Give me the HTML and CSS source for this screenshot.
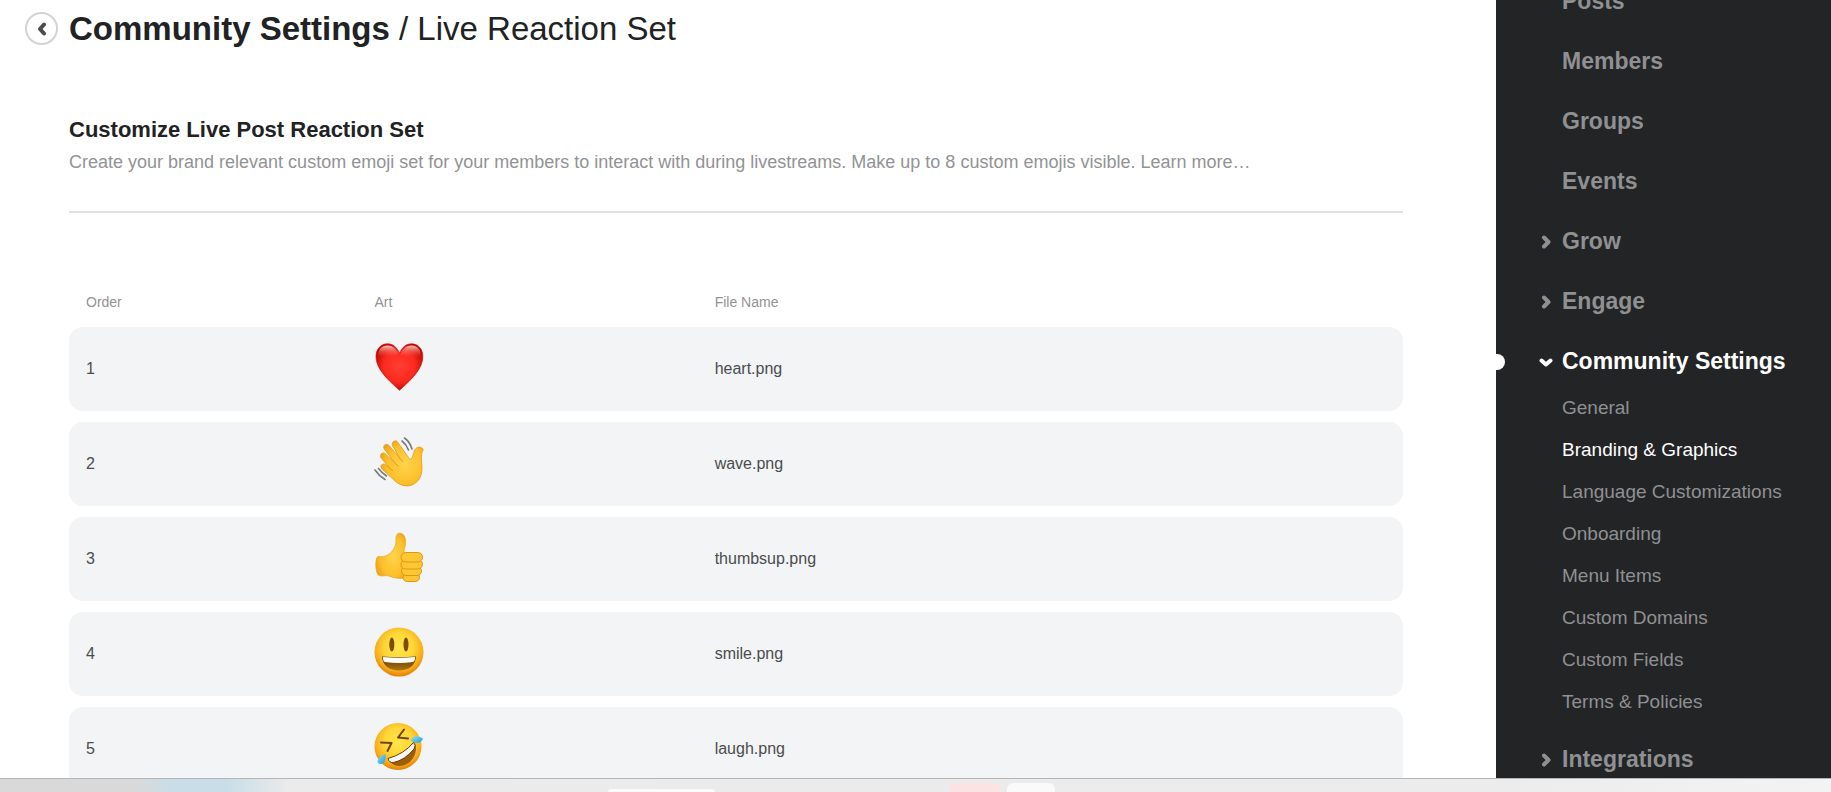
FILE: index.html
```html
<!DOCTYPE html>
<html lang="en">
<head>
    <meta charset="UTF-8">
    <meta name="viewport" content="width=device-width, initial-scale=1.0">
    <title>Community Settings / Live Reaction Set</title>
    <link rel="stylesheet" href="styles.css">
</head>
<body>
    <div class="workspace">
        <main class="content">
            <header class="page-header">
                <button type="button" class="back" aria-label="Back">
                    <svg width="10" height="14" viewBox="0 0 10 14"><path d="M7 2.500 L3 7 L7 11.500"/></svg>
                </button>
                <h1><strong>Community Settings</strong> / Live Reaction Set</h1>
            </header>

            <section class="intro">
                <h2>Customize Live Post Reaction Set</h2>
                <p>Create your brand relevant custom emoji set for your members to interact with during livestreams. Make up to 8 custom emojis visible. <a href="#">Learn more…</a></p>
            </section>

            <table class="reactions">
                <thead>
                    <tr>
                        <th class="order">Order</th>
                        <th class="art">Art</th>
                        <th>File Name</th>
                    </tr>
                </thead>
                <tbody>
                    <tr>
                        <td class="order">1</td>
                        <td class="art">
                            <svg viewBox="0 0 50 50">
                                <defs>
                                    <radialGradient id="heart" cx="50%" cy="48%" r="56%">
                                        <stop offset="0" stop-color="#ff3e33"/>
                                        <stop offset=".6" stop-color="#fb2a1f"/>
                                        <stop offset="1" stop-color="#b90602"/>
                                    </radialGradient>
                                    <linearGradient id="heartShine" x1="0" y1="0" x2="0" y2="1">
                                        <stop offset="0" stop-color="#ffd5cf" stop-opacity=".9"/>
                                        <stop offset="1" stop-color="#ff5a4c" stop-opacity="0"/>
                                    </linearGradient>
                                </defs>
                                <path d="M25.5 11.5 C23 5 18.500 1.800 13.500 1.800 C6.500 1.800 2 7.500 2 14.500 C2 26 12 36.500 25.500 48.200 C39 36.500 48.800 26 48.800 14.500 C48.800 7.500 44.500 1.800 37.500 1.800 C32.500 1.800 28 5 25.500 11.500 Z" fill="url(#heart)" stroke="#cf0c06" stroke-width=".7"/>
                                <path d="M3.800 15 C3.500 8 7.500 3.500 13.500 3.500 C18.500 3.500 22 6.500 24.500 12.500 C18 15 10 15 3.800 15 Z" fill="url(#heartShine)"/>
                                <path d="M47 15 C47.300 8 43.500 3.500 37.500 3.500 C32.500 3.500 29 6.500 26.500 12.500 C33 15 41 15 47 15 Z" fill="url(#heartShine)"/>
                            </svg>
                        </td>
                        <td>heart.png</td>
                    </tr>
                    <tr>
                        <td class="order">2</td>
                        <td class="art">
                            <svg viewBox="0 0 50 50">
                                <defs>
                                    <radialGradient id="skin" cx="58%" cy="52%" r="60%">
                                        <stop offset="0" stop-color="#ffd34d"/>
                                        <stop offset=".7" stop-color="#fcc029"/>
                                        <stop offset="1" stop-color="#eea51a"/>
                                    </radialGradient>
                                </defs>
                                <path d="M37 22 C39 20 39 17.500 40 14.500 C41.500 10.500 45 9 48 11 C50.500 12.500 47.800 14.500 47.500 18 C47 23 48.500 28 47.800 34 C47 43 40 49.500 32 48.900 C27.500 48.500 24.500 47 21 44 L8 32 C5.500 29.500 8 25.500 11 27.500 L16 31.500 L7.500 21.500 C4.500 18 8.500 14 11.500 17 L21 26 L10.500 12.500 C8 9 12 5.500 15 8.500 L26 21.500 L19 9.500 C16.500 5.500 21 1.500 24 5.500 L34.500 20.500 C35.300 22 36 22.500 37 22 Z" fill="url(#skin)" stroke="#e49a19" stroke-width=".8"/>
                                <g class="motion">
                                    <path d="M30.500 1 Q36 5 38 12"/>
                                    <path d="M28 4 Q32.500 7.500 34.500 13"/>
                                    <path d="M1 33 Q5 39 11 42.500"/>
                                    <path d="M4.500 31.500 Q8 36 12.500 39"/>
                                </g>
                                <path class="crease" d="M16 31.500 L18.500 33.500 M21 26 L24 29 M26 21.500 L28.500 24.500"/>
                            </svg>
                        </td>
                        <td>wave.png</td>
                    </tr>
                    <tr>
                        <td class="order">3</td>
                        <td class="art">
                            <svg viewBox="0 0 50 50">
                                <path d="M4 24.500 C9 25.500 14.500 23.500 17.500 20 C20.500 16.500 22.500 12 22 7.500 C21.500 2.500 24 .8 26.500 1.200 C31 2 32.500 8 31 14.500 C30 18 29.500 19.500 31 21 L31 46 C27 47 19 46 15 44 C12 42.800 8 44.800 5 43.500 C1.500 42 .5 26.500 4 24.500 Z" fill="url(#skin)" stroke="#e8a31e" stroke-width=".7"/>
                                <g class="fingers">
                                    <rect x="29" y="41" width="16.500" height="8.500" rx="4.200"/>
                                    <rect x="27.500" y="34.500" width="20" height="9" rx="4.500"/>
                                    <rect x="27" y="27.500" width="21.500" height="9.500" rx="4.700"/>
                                    <rect x="27" y="20.500" width="21.500" height="9.500" rx="4.700"/>
                                </g>
                            </svg>
                        </td>
                        <td>thumbsup.png</td>
                    </tr>
                    <tr>
                        <td class="order">4</td>
                        <td class="art">
                            <svg viewBox="0 0 50 50">
                                <defs>
                                    <radialGradient id="face" cx="50%" cy="40%" r="60%">
                                        <stop offset="0" stop-color="#ffe64a"/>
                                        <stop offset=".5" stop-color="#fed636"/>
                                        <stop offset=".82" stop-color="#f8ab1a"/>
                                        <stop offset="1" stop-color="#e37e04"/>
                                    </radialGradient>
                                    <linearGradient id="mouth" x1="0" y1="0" x2="0" y2="1">
                                        <stop offset="0" stop-color="#5c3304"/>
                                        <stop offset="1" stop-color="#ac7611"/>
                                    </linearGradient>
                                </defs>
                                <circle cx="25" cy="25" r="24.500" fill="url(#face)"/>
                                <ellipse cx="17.800" cy="17.500" rx="2.500" ry="7" fill="#7d4a09"/>
                                <ellipse cx="32" cy="17.500" rx="2.500" ry="7" fill="#7d4a09"/>
                                <path d="M8 29.500 Q25 31 42 29.500 C41.500 38.500 34.500 43.500 25 43.500 C15.500 43.500 8.500 38.500 8 29.500 Z" fill="url(#mouth)"/>
                                <path d="M8.800 30 Q25 31.500 41.200 30 Q41 34.500 39 35 Q25 37 11 35 Q9 34.500 8.800 30 Z" fill="#fff"/>
                            </svg>
                        </td>
                        <td>smile.png</td>
                    </tr>
                    <tr>
                        <td class="order">5</td>
                        <td class="art">
                            <svg viewBox="0 0 50 50">
                                <defs>
                                    <linearGradient id="tear" x1="0" y1="0" x2="1" y2="1">
                                        <stop offset="0" stop-color="#8be0fb"/>
                                        <stop offset="1" stop-color="#219dd8"/>
                                    </linearGradient>
                                </defs>
                                <circle cx="24" cy="24.500" r="23.500" fill="url(#face)"/>
                                <path class="squint" d="M7 20.500 L17.500 21 L13.500 29 M30 7.500 L24 15.500 L34 16.500"/>
                                <path d="M14 37 Q30 33 40.500 20 C44 27 41 36 34.500 41 C27 46 18 44.500 14 37 Z" fill="#9b5f0b"/>
                                <path d="M14 36.500 Q30 32 39.500 20.500 Q42.500 23 40 27 Q31 38 19.500 40.500 Q15 41 14 36.500 Z" fill="#f7f7f7" stroke="#6b3c05" stroke-width="1"/>
                                <path d="M37 18.500 C38 14 43 12.500 49 16.500 C48 21 42 22.500 37 18.500 Z" fill="url(#tear)"/>
                                <path d="M11.500 32 C12.500 38 10 42.500 6 42 C1.500 41 3 35 11.500 32 Z" fill="url(#tear)"/>
                            </svg>
                        </td>
                        <td>laugh.png</td>
                    </tr>
                </tbody>
            </table>
        </main>

        <nav class="sidebar">
            <ul class="menu">
                <li><a href="#">Posts</a></li>
                <li><a href="#">Members</a></li>
                <li><a href="#">Groups</a></li>
                <li><a href="#">Events</a></li>
                <li><a href="#"><svg class="chevron" viewBox="0 0 14 14"><path d="M5 2.500 L9.500 7 L5 11.500"/></svg>Grow</a></li>
                <li><a href="#"><svg class="chevron" viewBox="0 0 14 14"><path d="M5 2.500 L9.500 7 L5 11.500"/></svg>Engage</a></li>
                <li>
                    <a href="#" class="active"><svg class="chevron" viewBox="0 0 14 14"><path d="M2.500 5.500 L7 9.500 L11.500 5.500"/></svg>Community Settings</a>
                    <ul class="submenu">
                        <li><a href="#">General</a></li>
                        <li><a href="#" class="current">Branding &amp; Graphics</a></li>
                        <li><a href="#">Language Customizations</a></li>
                        <li><a href="#">Onboarding</a></li>
                        <li><a href="#">Menu Items</a></li>
                        <li><a href="#">Custom Domains</a></li>
                        <li><a href="#">Custom Fields</a></li>
                        <li><a href="#">Terms &amp; Policies</a></li>
                    </ul>
                </li>
                <li><a href="#"><svg class="chevron" viewBox="0 0 14 14"><path d="M5 2.500 L9.500 7 L5 11.500"/></svg>Integrations</a></li>
            </ul>
        </nav>
    </div>

    <div class="taskbar">
        <span class="tab search"></span>
        <span class="tab alert"></span>
        <span class="tab open"></span>
    </div>
</body>
</html>
```
FILE: styles.css
```css
* {
    box-sizing: border-box;
}

body {
    margin: 0;
    height: 100vh;
    display: flex;
    flex-direction: column;
    overflow: hidden;
    font-family: "Liberation Sans", Arial, sans-serif;
    color: #212224;
    background-color: #fff;
}

a {
    color: inherit;
    text-decoration: none;
}

ul {
    list-style: none;
    margin: 0;
    padding: 0;
}

.workspace {
    flex: 1;
    min-height: 0;
    display: flex;
    overflow: hidden;
}

.content {
    flex: 1;
    min-width: 0;
    padding: 8px 93px 0 69px;
}

/* Header */
.page-header {
    display: flex;
    align-items: center;
    gap: 11px;
    height: 41px;
    margin-left: -44px;
}

.back {
    display: flex;
    align-items: center;
    justify-content: center;
    width: 33px;
    height: 33px;
    padding: 0;
    border: 2px solid #d3d3d3;
    border-radius: 50%;
    background: #fff;
    cursor: pointer;
}

.back path {
    fill: none;
    stroke: #4b4c4e;
    stroke-width: 4;
    stroke-linecap: round;
    stroke-linejoin: round;
}

h1 {
    margin: 0;
    font-size: 33px;
    line-height: 40px;
    font-weight: normal;
}

.intro {
    margin-top: 66px;
    padding-bottom: 35px;
    border-bottom: 2px solid #e3e3e3;
}

h2 {
    margin: 0;
    font-size: 22px;
    line-height: 30px;
}

.intro p {
    margin: 0;
    padding-top: 3px;
    font-size: 18px;
    line-height: 28px;
    color: #929394;
}

/* Reactions table */
.reactions {
    width: 100%;
    margin-top: 63px;
    table-layout: fixed;
    border-collapse: separate;
    border-spacing: 0 11px;
    font-size: 16px;
}

.reactions th {
    height: 29px;
    padding: 0;
    font-size: 14px;
    font-weight: normal;
    text-align: left;
    color: #929394;
}

.reactions td {
    height: 84px;
    padding: 0;
    background-color: #f2f4f6;
    color: #4b4c4e;
}

.reactions .order {
    width: 22.9%;
    padding-left: 17px;
}

.reactions th.art {
    width: 25.5%;
}

.reactions td.art {
    padding-bottom: 4px;
}

.reactions td:first-child {
    border-radius: 14px 0 0 14px;
}

.reactions td:last-child {
    border-radius: 0 14px 14px 0;
}

.art svg {
    display: block;
    width: 50px;
    height: 50px;
}

.motion path,
.crease,
.squint {
    fill: none;
    stroke-linecap: round;
    stroke-linejoin: round;
}

.motion path {
    stroke: #77797c;
    stroke-width: 1.6;
}

.crease {
    stroke: #e49a19;
    stroke-width: 1;
}

.squint {
    stroke: #75430a;
    stroke-width: 2;
}

.fingers rect {
    fill: #fdc731;
    stroke: #df951a;
    stroke-width: 1;
}

/* Sidebar */
.sidebar {
    flex: 0 0 335px;
    overflow: hidden;
    background-color: #232426;
    color: #8f9092;
}

.menu {
    display: flex;
    flex-direction: column;
    gap: 10px;
    margin-top: -24px;
}

.menu > li > a {
    position: relative;
    display: block;
    padding-left: 66px;
    font-size: 23px;
    font-weight: bold;
    line-height: 50px;
}

.chevron {
    position: absolute;
    left: 43px;
    top: 19px;
    width: 14px;
    height: 14px;
}

.chevron path {
    fill: none;
    stroke: currentColor;
    stroke-width: 4;
    stroke-linecap: round;
    stroke-linejoin: round;
}

.menu > li > .active,
.submenu .current {
    color: #fff;
}

.active::before {
    content: "";
    position: absolute;
    left: 0;
    top: 18px;
    width: 9px;
    height: 16px;
    border-radius: 0 8px 8px 0;
    background-color: #fff;
}

.submenu {
    padding: 1px 0;
}

.submenu a {
    display: block;
    padding-left: 66px;
    font-size: 19px;
    line-height: 42px;
}

/* Bottom strip */
.taskbar {
    flex: 0 0 14px;
    display: flex;
    align-items: flex-end;
    overflow: hidden;
    border-top: 1px solid #b5b5b5;
    background: linear-gradient(to right, #d9d9d9 0, #d9d9d9 135px, #c8dde8 175px, #c8dde8 225px, #ebebeb 290px, #ececec 1500px, #f3f3f3 100%);
}

.tab {
    border-radius: 6px 6px 0 0;
    background-color: #fafafa;
}

.search {
    width: 107px;
    height: 3px;
    margin-left: 608px;
}

.alert {
    width: 50px;
    height: 9px;
    margin-left: 235px;
    background-color: #fbe3e4;
}

.open {
    width: 48px;
    height: 9px;
    margin-left: 7px;
}
```
